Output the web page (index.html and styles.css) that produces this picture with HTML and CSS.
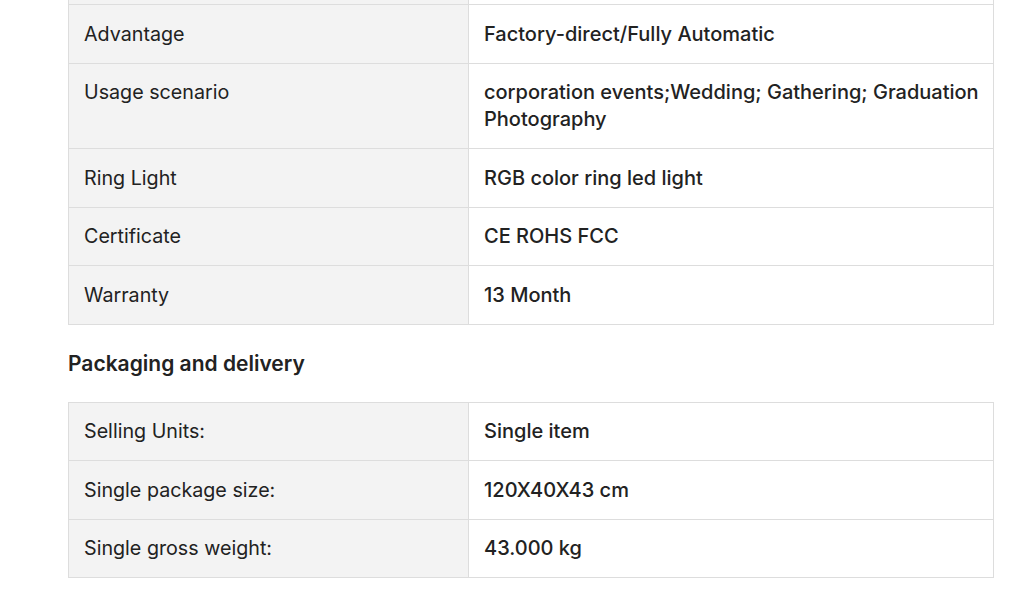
FILE: index.html
```html
<!DOCTYPE html>
<html lang="en">
<head>
<meta charset="utf-8">
<title>Product specifications</title>
<link rel="stylesheet" href="styles.css">
</head>
<body>
<main class="page">
  <table class="spec spec-first">
    <colgroup><col class="col-key"><col class="col-val"></colgroup>
    <tbody>
      <tr><td class="key">Model</td><td class="val">Photo Booth</td></tr>
      <tr><td class="key">Advantage</td><td class="val">Factory-direct/Fully Automatic</td></tr>
      <tr><td class="key">Usage scenario</td><td class="val">corporation events;Wedding; Gathering; Graduation Photography</td></tr>
      <tr><td class="key">Ring Light</td><td class="val">RGB color ring led light</td></tr>
      <tr><td class="key">Certificate</td><td class="val">CE ROHS FCC</td></tr>
      <tr><td class="key">Warranty</td><td class="val">13 Month</td></tr>
    </tbody>
  </table>
  <h2 class="section-title">Packaging and delivery</h2>
  <table class="spec">
    <colgroup><col class="col-key"><col class="col-val"></colgroup>
    <tbody>
      <tr><td class="key">Selling Units:</td><td class="val">Single item</td></tr>
      <tr><td class="key">Single package size:</td><td class="val">120X40X43 cm</td></tr>
      <tr><td class="key">Single gross weight:</td><td class="val">43.000 kg</td></tr>
    </tbody>
  </table>
</main>
</body>
</html>
```

FILE: styles.css
```css
html, body {
  margin: 0;
  padding: 0;
  background: #ffffff;
}
body {
  font-family: Inter, "Noto Sans", "Liberation Sans", sans-serif;
  color: #222222;
}
.page {
  padding-left: 68px;
  width: 926px;
}
.spec {
  width: 926px;
  border-collapse: collapse;
  table-layout: fixed;
  font-size: 20px;
  line-height: 27px;
}
.spec-first {
  margin-top: -54.5px;
}
.col-key {
  width: 400px;
}
.spec td {
  border: 1px solid #dddddd;
  padding: 15.5px 8px 15px 15px;
  vertical-align: top;
}
.key {
  background: #f3f3f3;
  font-weight: 400;
  font-size: 19.7px;
}
.val {
  background: #ffffff;
  font-weight: 500;
}
.section-title {
  margin: 24px 0 23px 0;
  font-size: 21px;
  line-height: 30px;
  font-weight: 600;
  color: #222222;
}
```
